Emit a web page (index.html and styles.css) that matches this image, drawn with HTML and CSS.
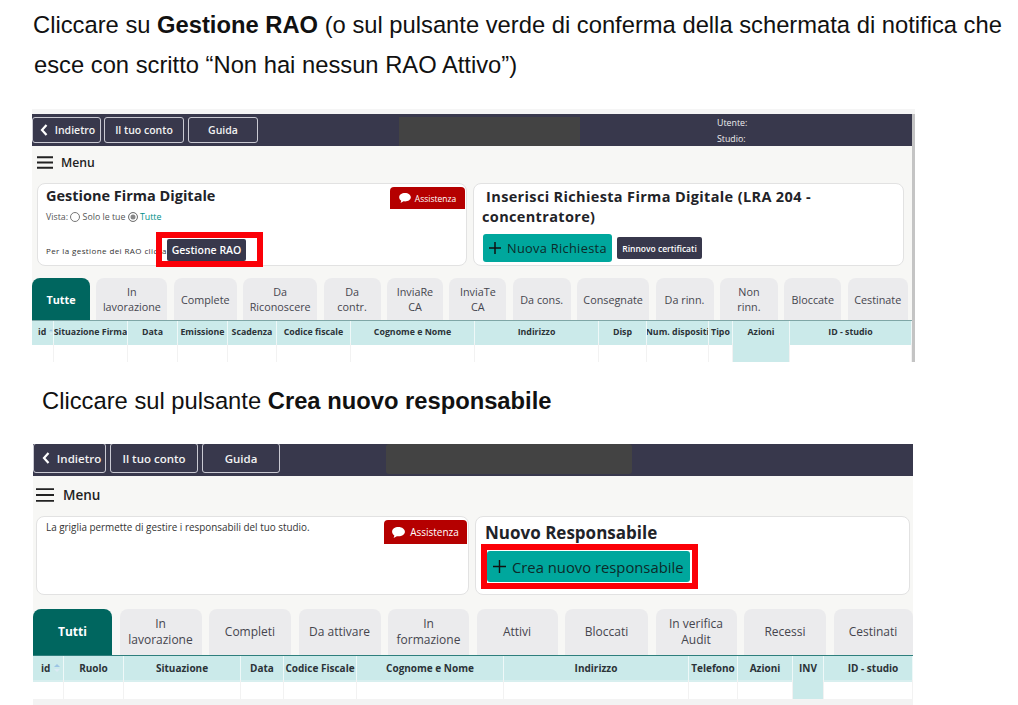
FILE: index.html
```html
<!DOCTYPE html>
<html lang="it">
<head>
<meta charset="utf-8">
<title>Gestione RAO</title>
<link rel="stylesheet" href="styles.css">
</head>
<body>
<p class="doc intro">Cliccare su <b>Gestione RAO</b> (o sul pulsante verde di conferma della schermata di notifica che<br><span class="nudge">esce con scritto “Non hai nessun RAO Attivo”)</span></p>

<section class="shot shot-a">
  <header class="bar">
    <a class="nav nav-back"><svg viewBox="0 0 10 14" class="chev"><path d="M7.500 2 3 7l4.500 5" fill="none" stroke="#fff" stroke-width="2.200"/></svg>Indietro</a>
    <a class="nav nav-conto">Il tuo conto</a>
    <a class="nav nav-guida">Guida</a>
    <div class="redacted"></div>
    <div class="user"><div>Utente:</div><div>Studio:</div></div>
  </header>
  <div class="body">
    <div class="menu"><svg viewBox="0 0 16 13" class="burger"><path d="M0 1.200h16M0 6.500h16M0 11.800h16" stroke="#222" stroke-width="2"/></svg>Menu</div>
    <div class="cards">
      <div class="card card-left">
        <a class="help"><svg viewBox="0 0 14 12" class="bubble"><path d="M7 0C3 0 0 2.200 0 5.200c0 1.700 1 3.100 2.500 4L1.700 12l3.500-2c.6.100 1.200.2 1.800.2 4 0 7-2.200 7-5S11 0 7 0Z" fill="#fff"/></svg>Assistenza</a>
        <h2 class="title">Gestione Firma Digitale</h2>
        <div class="vista">Vista: <i class="radio"></i> Solo le tue <i class="radio on"></i> <span class="teal">Tutte</span></div>
        <div class="rao">Per la gestione dei RAO clicca<a class="dark-btn">Gestione RAO<span class="mark"></span></a></div>
      </div>
      <div class="card card-right">
        <h2 class="title wide">&nbsp;Inserisci Richiesta Firma Digitale (LRA 204 - concentratore)</h2>
        <div class="actions">
          <a class="add"><svg viewBox="0 0 12 12" class="plus"><path d="M6 0v12M0 6h12" stroke="#111" stroke-width="1.500"/></svg>Nuova Richiesta</a>
          <a class="renew">Rinnovo certificati</a>
        </div>
      </div>
    </div>
    <nav class="tabs">
      <span class="tab active">Tutte</span><span class="tab">In<br>lavorazione</span><span class="tab">Complete</span><span class="tab">Da<br>Riconoscere</span><span class="tab">Da<br>contr.</span><span class="tab">InviaRe<br>CA</span><span class="tab">InviaTe<br>CA</span><span class="tab">Da cons.</span><span class="tab">Consegnate</span><span class="tab">Da rinn.</span><span class="tab">Non<br>rinn.</span><span class="tab">Bloccate</span><span class="tab">Cestinate</span>
    </nav>
    <div class="table">
      <div class="row head">
        <span class="id-cell">id<svg viewBox="0 0 6 8" class="sort"><path d="M3 0 6 3H0Z" fill="#9cc4e4"/><path d="M3 8 0 5h6Z" fill="#dbeaf4"/></svg></span><span>Situazione Firma</span><span>Data</span><span>Emissione</span><span>Scadenza</span><span>Codice fiscale</span><span>Cognome e Nome</span><span>Indirizzo</span><span>Disp</span><span>Num. dispositi</span><span>Tipo</span><span>Azioni</span><span>ID - studio</span>
      </div>
      <div class="row blank">
        <span></span><span></span><span></span><span></span><span></span><span></span><span></span><span></span><span></span><span></span><span></span><span class="fill"></span><span></span>
      </div>
    </div>
  </div>
</section>

<p class="doc caption">Cliccare sul pulsante <b>Crea nuovo responsabile</b></p>

<section class="shot shot-b">
  <header class="bar">
    <a class="nav nav-back"><svg viewBox="0 0 10 14" class="chev"><path d="M7.500 2 3 7l4.500 5" fill="none" stroke="#fff" stroke-width="2.200"/></svg>Indietro</a>
    <a class="nav nav-conto">Il tuo conto</a>
    <a class="nav nav-guida">Guida</a>
    <div class="redacted"></div>
  </header>
  <div class="body">
    <div class="menu"><svg viewBox="0 0 18 14" class="burger"><path d="M0 1.200h18M0 7h18M0 12.800h18" stroke="#222" stroke-width="1.800"/></svg>Menu</div>
    <div class="cards">
      <div class="card card-left">
        <a class="help"><svg viewBox="0 0 14 12" class="bubble"><path d="M7 0C3 0 0 2.200 0 5.200c0 1.700 1 3.100 2.500 4L1.700 12l3.500-2c.6.100 1.200.2 1.800.2 4 0 7-2.200 7-5S11 0 7 0Z" fill="#fff"/></svg>Assistenza</a>
        <p class="note">La griglia permette di gestire i responsabili del tuo studio.</p>
      </div>
      <div class="card card-right">
        <h2 class="title">Nuovo Responsabile</h2>
        <a class="add"><svg viewBox="0 0 12 12" class="plus"><path d="M6 0v12M0 6h12" stroke="#111" stroke-width="1.300"/></svg>Crea nuovo responsabile<span class="mark"></span></a>
      </div>
    </div>
    <nav class="tabs">
      <span class="tab active">Tutti</span><span class="tab">In<br>lavorazione</span><span class="tab">Completi</span><span class="tab">Da attivare</span><span class="tab">In<br>formazione</span><span class="tab">Attivi</span><span class="tab">Bloccati</span><span class="tab">In verifica<br>Audit</span><span class="tab">Recessi</span><span class="tab">Cestinati</span>
    </nav>
    <div class="table">
      <div class="row head">
        <span class="id-cell">id<svg viewBox="0 0 6 8" class="sort"><path d="M3 0 6 3H0Z" fill="#9cc4e4"/><path d="M3 8 0 5h6Z" fill="#dbeaf4"/></svg></span><span>Ruolo</span><span>Situazione</span><span>Data</span><span>Codice Fiscale</span><span>Cognome e Nome</span><span>Indirizzo</span><span>Telefono</span><span>Azioni</span><span>INV</span><span class="last">ID - studio</span>
      </div>
      <div class="row blank">
        <span></span><span></span><span></span><span></span><span></span><span></span><span></span><span></span><span></span><span class="fill"></span><span></span>
      </div>
      <div class="stripe"></div>
    </div>
  </div>
</section>
</body>
</html>
```
FILE: styles.css
```css
* { box-sizing: border-box; }
html, body { margin: 0; background: #fff; overflow: hidden; }
body { width: 1018px; height: 705px; font-family: "Open Sans", sans-serif; color: #222; }

.doc { margin: 0; font: 23.75px/40px "Liberation Sans", Arial, sans-serif; color: #111; }
.intro { padding: 5px 0 0 33px; height: 109px; white-space: nowrap; }
.nudge { margin-left: 1px; }
.caption { height: 82px; padding: 19px 0 0 42px; }

.shot { position: relative; overflow: hidden; }
.shot-a { width: 883px; height: 253px; margin-left: 32px; padding-top: 5px; background: #f5f5f5; }
.shot-b { width: 880px; height: 261px; margin-left: 33px; }

.bar { display: flex; height: 32px; background: #38384c; color: #fff; }
.nav { display: flex; align-items: center; justify-content: center; border: 1px solid #c9c9d2; border-radius: 3px; color: #f2f2f2; font-weight: 600; white-space: nowrap; }
.chev { display: block; flex: none; }
.redacted { background: #434343; }
.user { margin-left: 137px; font-size: 8.8px; line-height: 16px; color: #eee; }

.body { background: #f7f7f5; }
.menu { display: flex; align-items: center; font-weight: 600; color: #222; }
.burger { display: block; flex: none; }
.cards { display: flex; }
.card { background: #fff; border: 1px solid #e2e2e2; border-radius: 8px; }
.title { margin: 0; font-weight: 700; color: #1f2328; }
.help { float: right; display: flex; align-items: center; justify-content: center; background: #b50000; color: #fff; border-radius: 4px 4px 0 0; }
.bubble { display: block; flex: none; }
.add { display: flex; align-items: center; position: relative; background: #00a79d; color: #0c2b2a; border-radius: 3px; white-space: nowrap; }
.plus { display: block; flex: none; }
.mark { position: absolute; border: 6px solid #fb0007; pointer-events: none; }

.tabs { display: grid; }
.tab { display: flex; align-items: center; justify-content: center; text-align: center; background: #ebebed; color: #45454d; border-radius: 8px 8px 0 0; white-space: nowrap; }
.tab.active { background: #00665f; color: #fff; font-weight: 700; }

.row { display: grid; }
.head { background: #cbeaea; font-weight: 700; color: #2b3338; }
.head span { display: flex; align-items: center; justify-content: center; border-right: 1px solid #eef8f8; white-space: nowrap; overflow: hidden; }
.head .id-cell { justify-content: flex-start; }
.sort { display: block; flex: none; }
.blank { background: #fff; }
.blank span { border-right: 1px solid #f2f2f2; }
.blank .fill { background: #cbeaea; }

/* first screenshot */
.shot-a .bar, .shot-a .body { border-right: 3px solid #c4c4c4; }
.shot-a .nav { height: 26px; margin-top: 3px; font-size: 10.5px; }
.shot-a .nav-back { width: 69px; padding-left: 1px; }
.shot-a .chev { width: 10px; height: 14px; margin-right: 6px; }
.shot-a .nav-conto { width: 80px; margin-left: 3px; }
.shot-a .nav-guida { width: 70px; margin-left: 4px; }
.shot-a .redacted { width: 181px; margin: 3px 0 0 141px; }
.shot-a .user { padding-top: 1px; }
.shot-a .body { height: 216px; }
.shot-a .menu { height: 37px; padding: 0 0 5px 5px; font-size: 12.2px; }
.shot-a .burger { width: 16px; height: 13px; margin-right: 8px; }
.shot-a .cards { gap: 6px; padding-left: 5px; }
.shot-a .card { height: 83px; }
.shot-a .card-left { width: 430px; padding: 2px 1px 0 8px; }
.shot-a .card-right { width: 431px; padding: 3px 8px 0 8px; }
.shot-a .title { font-size: 14.5px; line-height: 20px; }
.shot-a .wide { letter-spacing: .35px; }
.shot-a .help { width: 75px; height: 22px; margin-top: 1px; font-size: 8.5px; }
.shot-a .bubble { width: 12px; height: 10px; margin-right: 4px; }
.vista { font-size: 8.8px; line-height: 12px; margin-top: 5px; color: #555; }
.radio { display: inline-block; width: 10px; height: 10px; border: 1px solid #777; border-radius: 50%; vertical-align: -2px; background: #fff; }
.radio.on { background: #888; box-shadow: inset 0 0 0 1.5px #fff; }
.teal { color: #008f88; }
.rao { position: relative; display: flex; align-items: center; height: 22px; margin-top: 16px; font-size: 8px; letter-spacing: .4px; color: #333; white-space: nowrap; }
.dark-btn { position: absolute; left: 121px; top: 0; width: 79px; height: 22px; display: flex; align-items: center; justify-content: center; background: #38384c; color: #fff; font-size: 10.5px; font-weight: 600; letter-spacing: 0; border-radius: 2px; }
.dark-btn .mark { left: -11px; top: -7px; width: 107px; height: 35px; }
.actions { display: flex; align-items: center; gap: 5px; margin-top: 7px; margin-left: 1px; }
.shot-a .add { width: 129px; height: 28px; padding-left: 6px; font-size: 12.8px; letter-spacing: .3px; }
.shot-a .plus { width: 12px; height: 12px; margin-right: 6px; }
.renew { display: flex; align-items: center; justify-content: center; width: 85px; height: 22px; background: #38384c; color: #fff; font-size: 8.5px; font-weight: 600; border-radius: 2px; white-space: nowrap; }
.shot-a .tabs { margin-top: 12px; height: 42px; font-size: 10.8px; line-height: 15px; grid-template-columns: 58px 71px 63px 74px 57px 56px 57px 58px 72px 58px 58px 57px 60px; column-gap: 6.4px; }
.shot-a .table { border-top: 1px solid #7fa6a6; }
.shot-a .row { grid-template-columns: 22px 74px 50px 50px 49px 74px 124px 124px 48px 62px 24px 57px 122px; }
.shot-a .head { height: 22px; font-size: 8.8px; }
.shot-a .id-cell { padding-left: 6px; gap: 3px; }
.shot-a .sort { width: 4px; height: 8px; }
.shot-a .blank { height: 20px; box-shadow: inset 0 2px 0 #cbeaea; }

/* second screenshot */
.shot-b .nav { height: 30px; margin-top: -1px; font-size: 11.5px; }
.shot-b .nav-back { width: 73px; padding-left: 3px; }
.shot-b .chev { width: 10px; height: 14px; margin-right: 6px; }
.shot-b .nav-conto { width: 88px; margin-left: 4px; }
.shot-b .nav-guida { width: 78px; margin-left: 4px; }
.shot-b .redacted { width: 246px; height: 30px; margin-left: 106px; border-radius: 3px; }
.shot-b .body { height: 229px; }
.shot-b .menu { height: 40px; padding: 0 0 3px 3px; font-size: 13.5px; }
.shot-b .burger { width: 18px; height: 14px; margin-right: 9px; }
.shot-b .cards { gap: 6px; padding-left: 3px; }
.shot-b .card { height: 79px; }
.shot-b .card-left { width: 433px; padding: 3px 1px 0 9px; }
.shot-b .card-right { width: 435px; padding: 5px 8px 0 9px; }
.shot-b .title { font-size: 17px; line-height: 22px; }
.shot-b .help { width: 83px; height: 24px; font-size: 10px; font-weight: 400; }
.shot-b .bubble { width: 13px; height: 11px; margin-right: 5px; }
.note { margin: 0; font-size: 9.9px; line-height: 15px; color: #333; }
.shot-b .add { width: 203px; height: 31px; margin: 7px 0 0 2px; padding-left: 6px; font-size: 14.8px; }
.shot-b .plus { width: 13px; height: 13px; margin-right: 6px; }
.shot-b .mark { left: -6px; top: -7px; width: 217px; height: 45px; }
.shot-b .tabs { margin-top: 14px; height: 46px; font-size: 12px; line-height: 16px; grid-template-columns: 79px 82px 82px 82px 81px 81px 83px 81px 82px 79px; column-gap: 7.5px; }
.shot-b .table { border-top: 1px solid #2f7f7d; }
.shot-b .row { grid-template-columns: 31px 60px 117px 43px 73px 147px 185px 49px 55px 31px 89px; }
.shot-b .head { height: 24px; font-size: 10px; }
.shot-b .id-cell { padding-left: 8px; gap: 4px; }
.shot-b .sort { width: 6px; height: 8px; }
.shot-b .last { padding-left: 10px; }
.shot-b .blank { height: 19px; box-shadow: inset 0 2px 0 #d8efef; }
.stripe { height: 6px; background: #f3f3f3; }
```
